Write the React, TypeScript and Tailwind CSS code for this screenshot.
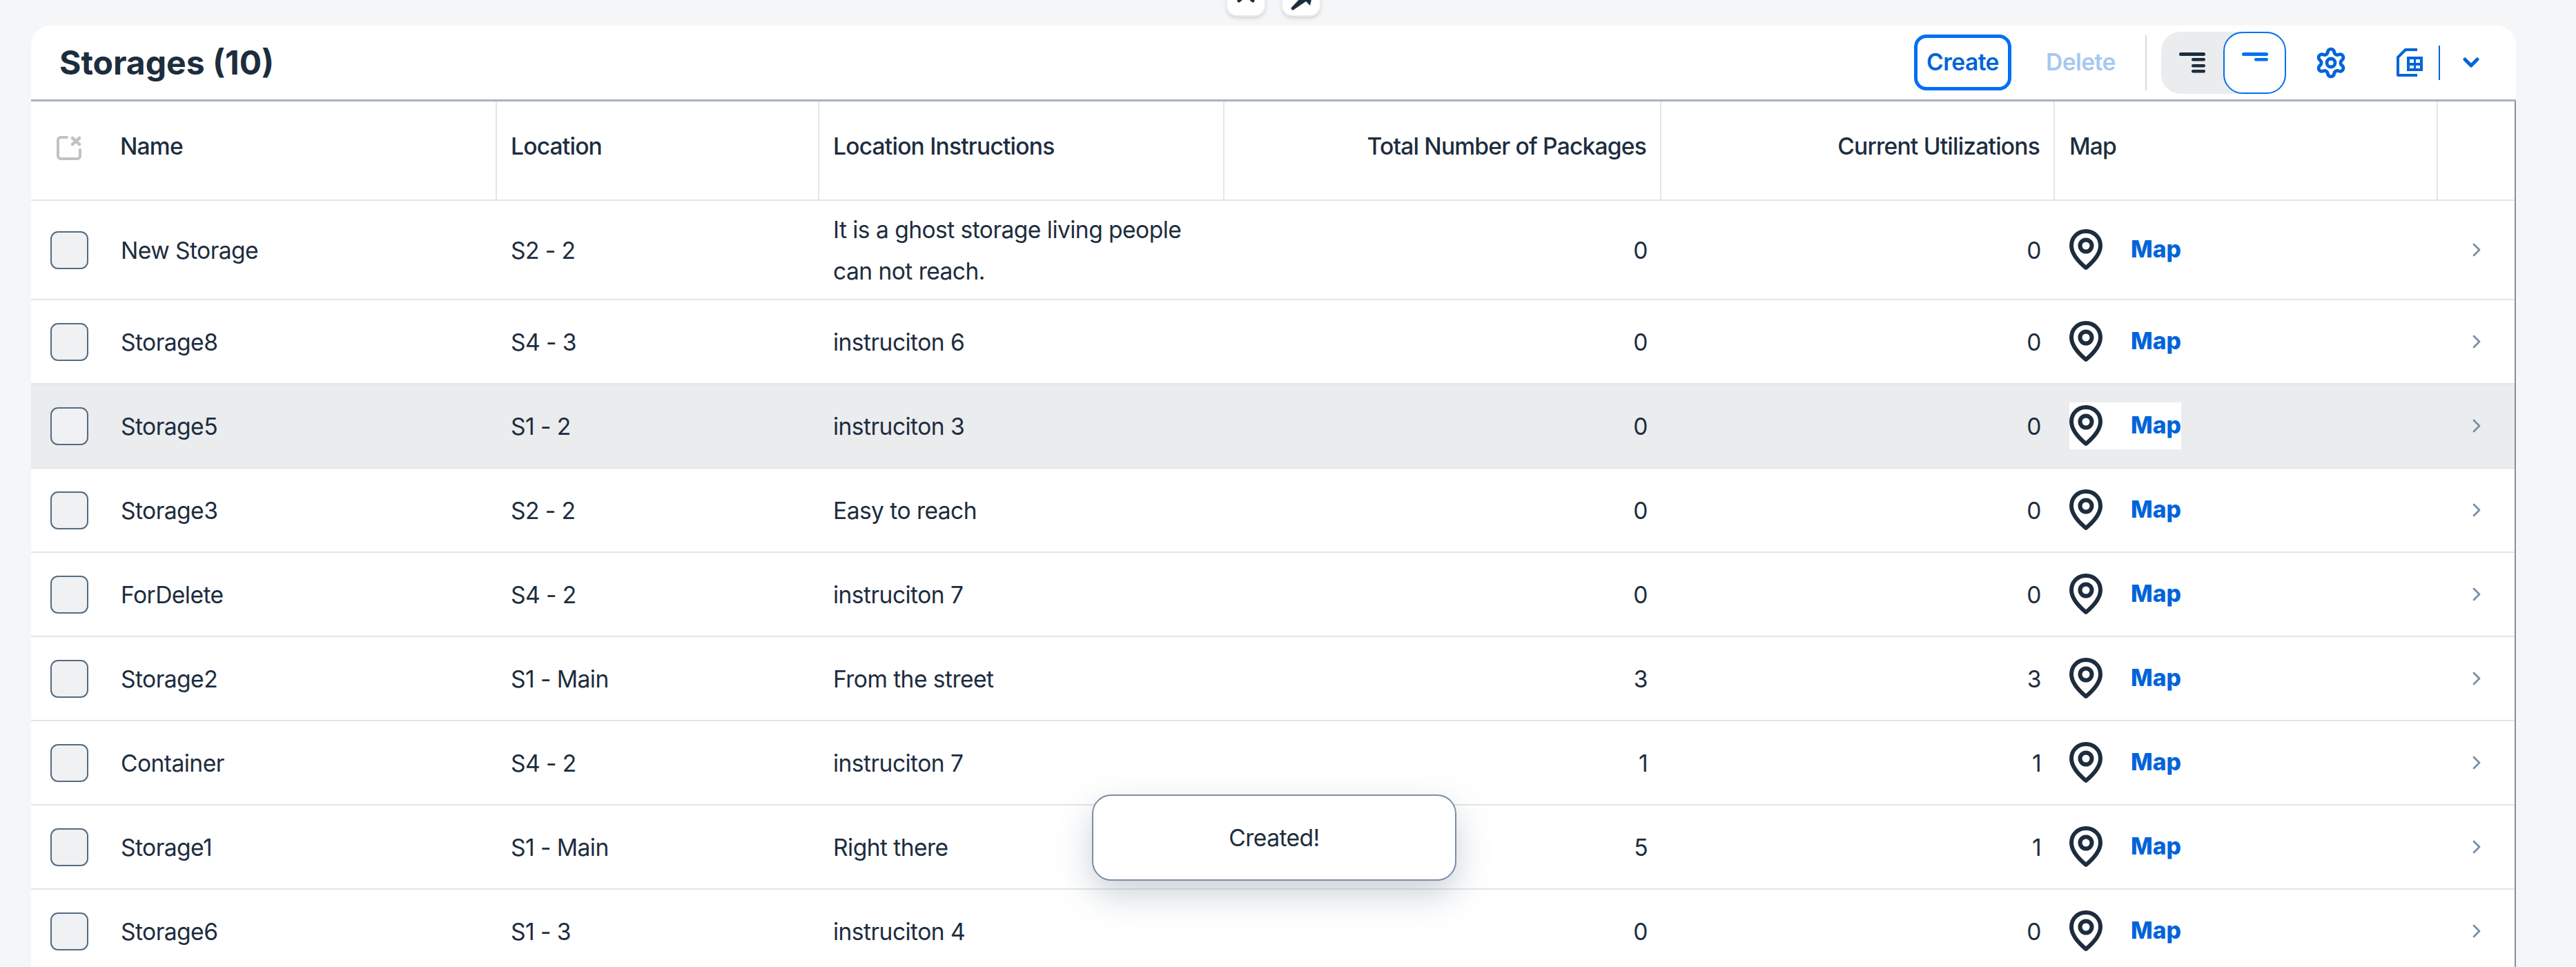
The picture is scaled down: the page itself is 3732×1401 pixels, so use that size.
import React from "react";
import { Settings } from "lucide-react";

const rows = [
  { name: "New Storage", location: "S2 - 2", instructions: "It is a ghost storage living people can not reach.", total: 0, current: 0 },
  { name: "Storage8", location: "S4 - 3", instructions: "instruciton 6", total: 0, current: 0 },
  { name: "Storage5", location: "S1 - 2", instructions: "instruciton 3", total: 0, current: 0 },
  { name: "Storage3", location: "S2 - 2", instructions: "Easy to reach", total: 0, current: 0 },
  { name: "ForDelete", location: "S4 - 2", instructions: "instruciton 7", total: 0, current: 0 },
  { name: "Storage2", location: "S1 - Main", instructions: "From the street", total: 3, current: 3 },
  { name: "Container", location: "S4 - 2", instructions: "instruciton 7", total: 1, current: 1 },
  { name: "Storage1", location: "S1 - Main", instructions: "Right there", total: 5, current: 1 },
  { name: "Storage6", location: "S1 - 3", instructions: "instruciton 4", total: 0, current: 0 },
];

const gridCols = "grid grid-cols-[675px_467px_587px_633px_570px_555px_111px]";

function PinIcon() {
  return (
    <svg width="48" height="60" viewBox="0 0 48 60" fill="none" stroke="#1d2d3e" strokeWidth="6">
      <path d="M24 3C12 3 3 12 3 24C3 36 15 48.500 24 56C33 48.500 45 36 45 24C45 12 36 3 24 3Z" strokeLinejoin="round" />
      <circle cx="24" cy="24" r="8.500" />
    </svg>
  );
}

function SelectAllIcon() {
  return (
    <svg width="36" height="35" viewBox="0 0 36 35" fill="none" stroke="#bfc3c7" strokeWidth="4" strokeLinecap="round">
      <path d="M15 2H6a4 4 0 0 0-4 4v23a4 4 0 0 0 4 4h24a4 4 0 0 0 4-4V20" />
      <path d="M23 3l10 9M33 3l-10 9" strokeWidth="4.500" />
    </svg>
  );
}

function ExportIcon() {
  return (
    <svg width="38" height="41" viewBox="0 0 38 41" fill="none">
      <path d="M30 2H13L2 13V39H30" stroke="#0064d9" strokeWidth="4" strokeLinejoin="round" />
      <path fillRule="evenodd" clipRule="evenodd" d="M15 12H38V33H15ZM19 16V21H25V16ZM28 16V21H34V16ZM19 25V29H25V25ZM28 25V29H34V25Z" fill="#0064d9" />
    </svg>
  );
}

function SortIcon({ color, lines }: { color: string; lines: number }) {
  return (
    <svg width="38" height="30" viewBox="0 0 38 30" fill={color}>
      <rect x="0" y="0" width="38" height="5" rx="2.500" />
      {lines > 0 && <rect x="18" y="8" width="20" height="4.500" rx="2.200" />}
      {lines > 1 && <rect x="18" y="17" width="20" height="4.500" rx="2.200" />}
      {lines > 2 && <rect x="18" y="25" width="20" height="4.500" rx="2.200" />}
    </svg>
  );
}

function Row({ row, highlight }: { row: (typeof rows)[number]; highlight: boolean }) {
  const tall = row.name === "New Storage";
  return (
    <div
      className={`${gridCols} items-center border-b-2 border-[#e5e5e5] ${tall ? "h-[144px]" : "h-[122px]"} ${
        highlight ? "bg-[#eaecee]" : ""
      }`}
    >
      <div className="flex items-center pl-[28px]">
        <div className="w-[55px] h-[55px] rounded-[11px] border-2 border-[#556b82] bg-[#eff1f2]" />
        <span className="ml-[47px] mt-[2px]">{row.name}</span>
      </div>
      <div className="pl-[20px] mt-[2px]">{row.location}</div>
      <div className="pl-[20px] pr-[40px] leading-[60px] mt-[2px]">{row.instructions}</div>
      <div className="pr-[20px] text-right mt-[2px]">{row.total}</div>
      <div className="pr-[20px] text-right mt-[2px]">{row.current}</div>
      <div className="flex pl-[21px]">
        <div className="flex items-center h-[68px] bg-white">
          <PinIcon />
          <a className="ml-[41px] mb-[2px] font-extrabold tracking-normal text-[#0064d9]">Map</a>
        </div>
      </div>
      <div className="pl-[50px]">
        <svg width="12" height="20" viewBox="0 0 12 20" fill="none" stroke="#788fa6" strokeWidth="2.800" strokeLinecap="round" strokeLinejoin="round">
          <path d="M2 2l8 8-8 8" />
        </svg>
      </div>
    </div>
  );
}

export default function App() {
  return (
    <div className="relative h-[1401px] overflow-hidden bg-[#f5f6f7] pt-[37px] pl-[45px] font-['Inter',sans-serif] text-[33.6px] tracking-[-0.55px] text-[#1d2d3e]">
      {/* header collapse / pin buttons */}
      <div className="absolute top-[-40px] left-[1776px] flex gap-[22px]">
        <div className="w-[58px] h-[64px] rounded-[16px] bg-white border-2 border-[#eaecee] shadow-md flex items-end justify-center pb-[18px]">
          <svg width="26" height="16" viewBox="0 0 26 16" fill="none" stroke="#1d2d3e" strokeWidth="5" strokeLinecap="round">
            <path d="M3 13L13 4l10 9" />
          </svg>
        </div>
        <div className="w-[58px] h-[64px] rounded-[16px] bg-white border-2 border-[#eaecee] shadow-md flex items-end justify-center pb-[6px]">
          <svg width="36" height="30" viewBox="0 0 36 30" fill="#1d2d3e">
            <path d="M14 0H36L31 22L25 16L6 29L3 26L19 9Z" />
          </svg>
        </div>
      </div>

      <div className="w-[3600px] bg-white rounded-t-[28px]">
        <div className="h-[110px] flex items-center border-b-[3px] border-[#a8b2bd] pl-[41px]">
          <h1 className="text-[48px] font-bold tracking-normal mt-[1px]">Storages (10)</h1>
          <div className="ml-auto flex items-center">
            <button className="w-[141px] h-[81px] rounded-[18px] border-[5px] border-[#0070f2] text-[#0064d9] font-semibold">
              Create
            </button>
            <span className="ml-[50px] w-[98px] font-semibold text-[#a6c8f0]">Delete</span>
            <div className="ml-[46px] w-[2px] h-[80px] bg-[#d9d9d9]" />
            <div className="ml-[21px] flex h-[90px] rounded-[28px] bg-[#eaecee]">
              <div className="w-[90px] flex items-center justify-center">
                <SortIcon color="#1d2d3e" lines={3} />
              </div>
              <div className="w-[91px] flex items-center justify-center rounded-[28px] border-2 border-[#0070f2] bg-white">
                <SortIcon color="#0070f2" lines={1} />
              </div>
            </div>
            <Settings className="ml-[41px] w-[48px] h-[48px] text-[#0064d9]" strokeWidth={2.400} />
            <div className="ml-[71px]">
              <ExportIcon />
            </div>
            <div className="ml-[23px] w-[2px] h-[50px] bg-[#0064d9]" />
            <svg className="ml-[33px] mr-[53px]" width="24" height="16" viewBox="0 0 24 16" fill="none" stroke="#0064d9" strokeWidth="5" strokeLinecap="round" strokeLinejoin="round">
              <path d="M3 3l9 9 9-9" />
            </svg>
          </div>
        </div>

        <div className="border-r-2 border-[#8a9099]">
          <div className={`${gridCols} h-[144px] border-b-2 border-[#e5e5e5] font-medium tracking-[-0.8px]`}>
            <div className="flex items-center pl-[37px] border-r-2 border-[#e5e5e5]">
              <div className="mb-[7px]">
                <SelectAllIcon />
              </div>
              <span className="ml-[56px] mb-[12px]">Name</span>
            </div>
            <div className="flex items-center pl-[20px] pb-[12px] border-r-2 border-[#e5e5e5]">Location</div>
            <div className="flex items-center pl-[20px] pb-[12px] border-r-2 border-[#e5e5e5]">Location Instructions</div>
            <div className="flex items-center justify-end pr-[20px] pb-[12px] border-r-2 border-[#e5e5e5]">Total Number of Packages</div>
            <div className="flex items-center justify-end pr-[20px] pb-[12px] border-r-2 border-[#e5e5e5]">Current Utilizations</div>
            <div className="flex items-center pl-[21px] pb-[12px] border-r-2 border-[#e5e5e5]">Map</div>
            <div />
          </div>
          {rows.map((row) => (
            <Row key={row.name} row={row} highlight={row.name === "Storage5"} />
          ))}
        </div>
      </div>

      {/* toast */}
      <div className="absolute left-[1582px] top-[1151px] w-[528px] h-[125px] flex items-center justify-center rounded-[28px] border-2 border-[#7a8ea3] bg-white text-[#1d2d3e] shadow-[0_20px_50px_rgba(85,107,130,0.3)]">
        <span className="mt-[2px]">Created!</span>
      </div>
    </div>
  );
}
